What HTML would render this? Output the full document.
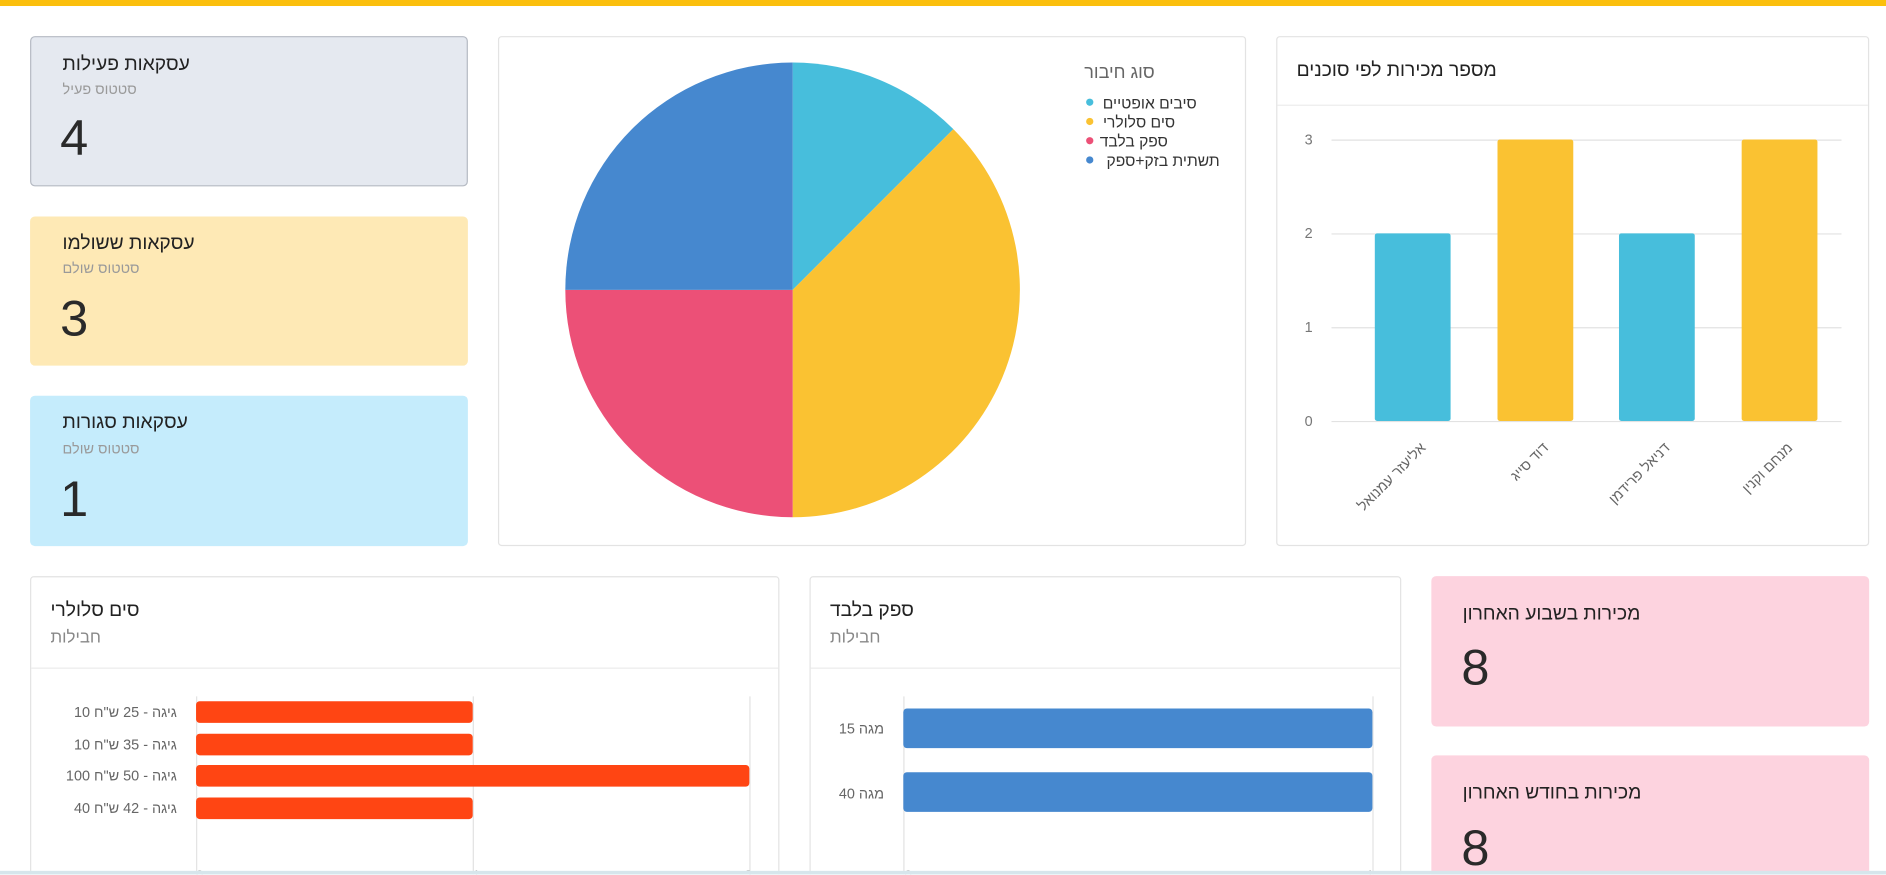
<!DOCTYPE html>
<html><head><meta charset="utf-8">
<style>
html,body{margin:0;padding:0;width:1886px;height:875px;overflow:hidden;background:#fff;font-family:"Liberation Sans","DejaVu Sans",sans-serif;}
#w{position:absolute;left:0;top:0;width:1568px;height:727px;overflow:hidden;transform:scale(1.20281);transform-origin:0 0;}
.a{position:absolute;box-sizing:border-box;}
.card{border-radius:4px;}
.t{position:absolute;color:#222;font-size:16px;white-space:nowrap;}
.s{position:absolute;color:#9a9a9a;font-size:12px;white-space:nowrap;}
.n{position:absolute;color:#2a2a2a;font-size:42px;white-space:nowrap;}
svg{position:absolute;left:0;top:0;overflow:visible}
</style></head><body><div id="w">
<div class="a" style="left:0;top:0;width:1568px;height:5px;background:#fbbf0c"></div>

<div class="a card" style="left:25px;top:30px;width:364px;height:125px;background:#e5e9f0;border:1px solid #b5bac3"></div>
<div class="t" style="left:52px;top:45px">עסקאות פעילות</div>
<div class="s" style="left:52px;top:67px">סטטוס פעיל</div>
<div class="n" style="left:50px;top:91px">4</div>

<div class="a card" style="left:25px;top:180px;width:364px;height:124px;background:#fee9b5"></div>
<div class="t" style="left:52px;top:194px">עסקאות ששולמו</div>
<div class="s" style="left:52px;top:216px">סטטוס שולם</div>
<div class="n" style="left:50px;top:241px">3</div>

<div class="a card" style="left:25px;top:329px;width:364px;height:125px;background:#c5ecfc"></div>
<div class="t" style="left:52px;top:343px">עסקאות סגורות</div>
<div class="s" style="left:52px;top:366px">סטטוס שולם</div>
<div class="n" style="left:50px;top:391px">1</div>

<div class="a" style="left:414px;top:30px;width:622px;height:424px;border:1px solid #e3e3e3;border-radius:3px"></div>
<div class="a" style="left:1061px;top:30px;width:493px;height:424px;border:1px solid #e3e3e3;border-radius:3px"></div>
<div class="a" style="left:1062px;top:87px;width:491px;height:1px;background:#ececec"></div>
<div class="t" style="left:1078px;top:50px">מספר מכירות לפי סוכנים</div>

<div class="a" style="left:25px;top:479px;width:623px;height:260px;border:1px solid #e3e3e3;border-radius:3px"></div>
<div class="a" style="left:26px;top:555px;width:621px;height:1px;background:#ececec"></div>
<div class="t" style="left:42px;top:499px">סים סלולרי</div>
<div class="s" style="left:42px;top:521px;font-size:14px;color:#888">חבילות</div>

<div class="a" style="left:673px;top:479px;width:492px;height:260px;border:1px solid #e3e3e3;border-radius:3px"></div>
<div class="a" style="left:674px;top:555px;width:490px;height:1px;background:#ececec"></div>
<div class="t" style="left:690px;top:499px">ספק בלבד</div>
<div class="s" style="left:690px;top:521px;font-size:14px;color:#888">חבילות</div>

<div class="a card" style="left:1190px;top:479px;width:364px;height:125px;background:#fdd3df"></div>
<div class="t" style="left:1216px;top:502px">מכירות בשבוע האחרון</div>
<div class="n" style="left:1215px;top:531px">8</div>
<div class="a card" style="left:1190px;top:628px;width:364px;height:125px;background:#fdd3df"></div>
<div class="t" style="left:1216px;top:651px">מכירות בחודש האחרון</div>
<div class="n" style="left:1215px;top:681px">8</div>

<svg width="1568" height="727" font-family="Liberation Sans, DejaVu Sans, sans-serif">
<path d="M659,241 L659,52 A189,189 0 0 1 792.6,107.4 Z" fill="#47bedc"/>
<path d="M659,241 L792.6,107.4 A189,189 0 0 1 659,430 Z" fill="#fac232"/>
<path d="M659,241 L659,430 A189,189 0 0 1 470,241 Z" fill="#ec5077"/>
<path d="M659,241 L470,241 A189,189 0 0 1 659,52 Z" fill="#4688cf"/>
<text x="960" y="65" font-size="15" fill="#666" text-anchor="end">סוג חיבור</text>
<circle cx="906" cy="85" r="3" fill="#47bedc"/><text x="995" y="90" font-size="13" fill="#333" text-anchor="end">סיבים אופטיים</text>
<circle cx="906" cy="101" r="3" fill="#fac232"/><text x="977" y="106" font-size="13" fill="#333" text-anchor="end">סים סלולרי</text>
<circle cx="906" cy="117" r="3" fill="#ec5077"/><text x="971" y="122" font-size="13" fill="#333" text-anchor="end">ספק בלבד</text>
<circle cx="906" cy="133" r="3" fill="#4688cf"/><text x="1014" y="138" font-size="13" fill="#333" text-anchor="end">תשתית בזק+ספק</text>
<g stroke="#e2e2e2" stroke-width="1">
<line x1="1107" y1="116.5" x2="1531" y2="116.5"/><line x1="1107" y1="194.5" x2="1531" y2="194.5"/>
<line x1="1107" y1="272.5" x2="1531" y2="272.5"/><line x1="1107" y1="350.5" x2="1531" y2="350.5"/>
</g>
<g font-size="12" fill="#777" text-anchor="middle">
<text x="1088" y="120">3</text><text x="1088" y="198">2</text><text x="1088" y="276">1</text><text x="1088" y="354">0</text></g>
<rect x="1143" y="194" width="63" height="156" rx="2" fill="#47bedc"/>
<rect x="1245" y="116" width="63" height="234" rx="2" fill="#fac232"/>
<rect x="1346" y="194" width="63" height="156" rx="2" fill="#47bedc"/>
<rect x="1448" y="116" width="63" height="234" rx="2" fill="#fac232"/>
<g font-size="12" fill="#666" text-anchor="end">
<text transform="translate(1186,373) rotate(-45)">אליעזר עמנואל</text>
<text transform="translate(1288,373) rotate(-45)">דוד סייג</text>
<text transform="translate(1389,373) rotate(-45)">דניאל פרידמן</text>
<text transform="translate(1491,373) rotate(-45)">מנחם וקנין</text>
</g>
<g stroke="#e2e2e2"><line x1="163.5" y1="579" x2="163.5" y2="727"/><line x1="393.5" y1="579" x2="393.5" y2="727"/><line x1="623.5" y1="579" x2="623.5" y2="727"/></g>
<g fill="#ff4513"><rect x="163" y="583" width="230" height="18" rx="3"/><rect x="163" y="610" width="230" height="18" rx="3"/><rect x="163" y="636" width="460" height="18" rx="3"/><rect x="163" y="663" width="230" height="18" rx="3"/></g>
<g font-size="12" fill="#666">
<text x="147" y="596" direction="rtl" unicode-bidi="embed" text-anchor="start">גיגה - 25 ש"ח 10</text>
<text x="147" y="623" direction="rtl" unicode-bidi="embed" text-anchor="start">גיגה - 35 ש"ח 10</text>
<text x="147" y="649" direction="rtl" unicode-bidi="embed" text-anchor="start">גיגה - 50 ש"ח 100</text>
<text x="147" y="676" direction="rtl" unicode-bidi="embed" text-anchor="start">גיגה - 42 ש"ח 40</text>
</g>
<g font-size="11" fill="#777" text-anchor="middle"><text x="166" y="731">0</text><text x="396" y="731">1</text><text x="622" y="731">2</text></g>
<g stroke="#e2e2e2"><line x1="751.5" y1="579" x2="751.5" y2="727"/><line x1="1141.5" y1="579" x2="1141.5" y2="727"/></g>
<g fill="#4688cf"><rect x="751" y="589" width="390" height="33" rx="3"/><rect x="751" y="642" width="390" height="33" rx="3"/></g>
<g font-size="12" fill="#666">
<text x="735" y="610" direction="rtl" unicode-bidi="embed" text-anchor="start">מגה 15</text>
<text x="735" y="664" direction="rtl" unicode-bidi="embed" text-anchor="start">מגה 40</text>
</g>
<g font-size="11" fill="#777" text-anchor="middle"><text x="755" y="731">0</text><text x="1139" y="731">1</text></g>
</svg>
<div class="a" style="left:0;top:724px;width:1568px;height:3px;background:#d6e6ec"></div>
</div></body></html>
